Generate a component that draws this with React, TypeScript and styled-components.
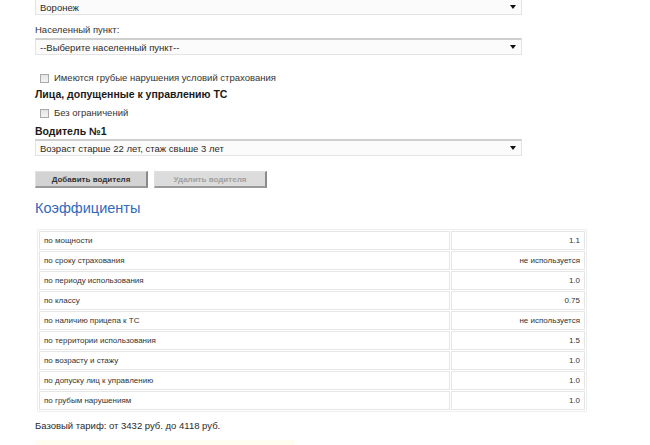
import React, { FunctionComponent } from 'react';
import styled, { createGlobalStyle } from 'styled-components';

const GlobalStyle = createGlobalStyle`
  html, body {
    margin: 0;
    padding: 0;
    background: #ffffff;
    overflow: hidden;
  }
  body {
    font-family: "Liberation Sans", Arial, sans-serif;
    color: #333333;
  }
`;

const Wrapper = styled.div`
  width: 650px;
  padding: 0 0 0 35px;
  margin-top: -2px;
  box-sizing: border-box;
  display: flex;
  flex-direction: column;
  align-items: flex-start;

  & > * {
    flex-shrink: 0;
  }
`;

const SelectBox = styled.div<{ $gap?: number }>`
  width: 487px;
  height: 17px;
  margin-top: ${({ $gap }) => $gap ?? 0}px;
  box-sizing: border-box;
  display: flex;
  align-items: center;
  justify-content: space-between;
  padding: 0 5px 0 4px;
  border: 1px solid #e4e4e4;
  border-top: 2px solid #cfcfcf;
  background: #fbfbfb;
  font-size: 9.5px;
  color: #2a2a2a;
`;

const Caret = styled.span`
  width: 0;
  height: 0;
  border-left: 3px solid transparent;
  border-right: 3px solid transparent;
  border-top: 4px solid #111111;
`;

const Label = styled.div<{ $gap: number }>`
  margin-top: ${({ $gap }) => $gap}px;
  font-size: 9.5px;
  line-height: 14px;
  color: #333333;
`;

const SubHeading = styled.div<{ $gap: number }>`
  margin-top: ${({ $gap }) => $gap}px;
  font-size: 10.5px;
  line-height: 14px;
  font-weight: bold;
  color: #1a1a1a;
`;

const CheckRow = styled.label<{ $gap: number }>`
  margin-top: ${({ $gap }) => $gap}px;
  display: flex;
  align-items: center;
  gap: 5px;
  padding-left: 5px;
  font-size: 9.5px;
  line-height: 14px;
  color: #333333;
`;

const CheckBox = styled.span`
  width: 9px;
  height: 9px;
  box-sizing: border-box;
  border: 1px solid #a9a9a9;
  background: linear-gradient(#e4e4e4, #f4f4f4);
`;

const ButtonRow = styled.div`
  margin-top: 15px;
  display: flex;
  gap: 6px;
`;

const FormButton = styled.button<{ $disabled?: boolean }>`
  width: 113px;
  height: 17px;
  padding: 0;
  box-sizing: border-box;
  border: 1px solid #e0e0e0;
  border-right: 2px solid #8a8a8a;
  border-bottom: 2px solid #9a9a9a;
  background: ${({ $disabled }) => ($disabled ? '#dcdcdc' : '#d3d3d3')};
  font-family: "Liberation Sans", Arial, sans-serif;
  font-size: 8px;
  font-weight: bold;
  color: ${({ $disabled }) => ($disabled ? '#a0a0a0' : '#333333')};
`;

const SectionTitle = styled.h2`
  margin: 10px 0 0;
  font-size: 14.5px;
  line-height: 20px;
  font-weight: normal;
  color: #3169bd;
`;

const RatioTable = styled.table`
  margin-top: 11px;
  margin-left: 2px;
  width: 550px;
  border-collapse: separate;
  border-spacing: 1px;
  border: 1px solid #eeeeee;
`;

const NameCell = styled.td`
  height: 17px;
  padding: 0 4px;
  border: 1px solid #e6e6e6;
  font-size: 8px;
  color: #333333;
  width: 401px;
`;

const ValueCell = styled.td`
  height: 17px;
  padding: 0 4px;
  border: 1px solid #e6e6e6;
  font-size: 8px;
  color: #333333;
  text-align: right;
`;

const BaseRate = styled.div`
  margin-top: 7px;
  font-size: 9.5px;
  line-height: 14px;
  color: #2a2a2a;
`;

const Notice = styled.div`
  margin-top: 7px;
  width: 260px;
  height: 6px;
  background: #fffdf0;
`;

const ratios: { name: string; value: string }[] = [
  { name: 'по мощности', value: '1.1' },
  { name: 'по сроку страхования', value: 'не используется' },
  { name: 'по периоду использования', value: '1.0' },
  { name: 'по классу', value: '0.75' },
  { name: 'по наличию прицепа к ТС', value: 'не используется' },
  { name: 'по территории использования', value: '1.5' },
  { name: 'по возрасту и стажу', value: '1.0' },
  { name: 'по допуску лиц к управлению', value: '1.0' },
  { name: 'по грубым нарушениям', value: '1.0' },
];

const App: FunctionComponent = () => {
  return <>
    <GlobalStyle />
    <Wrapper>
      <SelectBox>
        <span>Воронеж</span>
        <Caret />
      </SelectBox>
      <Label $gap={8}>Населенный пункт:</Label>
      <SelectBox $gap={1}>
        <span>--Выберите населенный пункт--</span>
        <Caret />
      </SelectBox>
      <CheckRow $gap={16}>
        <CheckBox />
        Имеются грубые нарушения условий страхования
      </CheckRow>
      <SubHeading $gap={2}>Лица, допущенные к управлению ТС</SubHeading>
      <CheckRow $gap={5}>
        <CheckBox />
        Без ограничений
      </CheckRow>
      <SubHeading $gap={4}>Водитель №1</SubHeading>
      <SelectBox $gap={1}>
        <span>Возраст старше 22 лет, стаж свыше 3 лет</span>
        <Caret />
      </SelectBox>
      <ButtonRow>
        <FormButton>Добавить водителя</FormButton>
        <FormButton $disabled>Удалить водителя</FormButton>
      </ButtonRow>
      <SectionTitle>Коэффициенты</SectionTitle>
      <RatioTable>
        <tbody>
          {ratios.map(({ name, value }) => <tr key={name}>
            <NameCell>{name}</NameCell>
            <ValueCell>{value}</ValueCell>
          </tr>)}
        </tbody>
      </RatioTable>
      <BaseRate>Базовый тариф: от 3432 руб. до 4118 руб.</BaseRate>
      <Notice />
    </Wrapper>
  </>
}

export default App;
